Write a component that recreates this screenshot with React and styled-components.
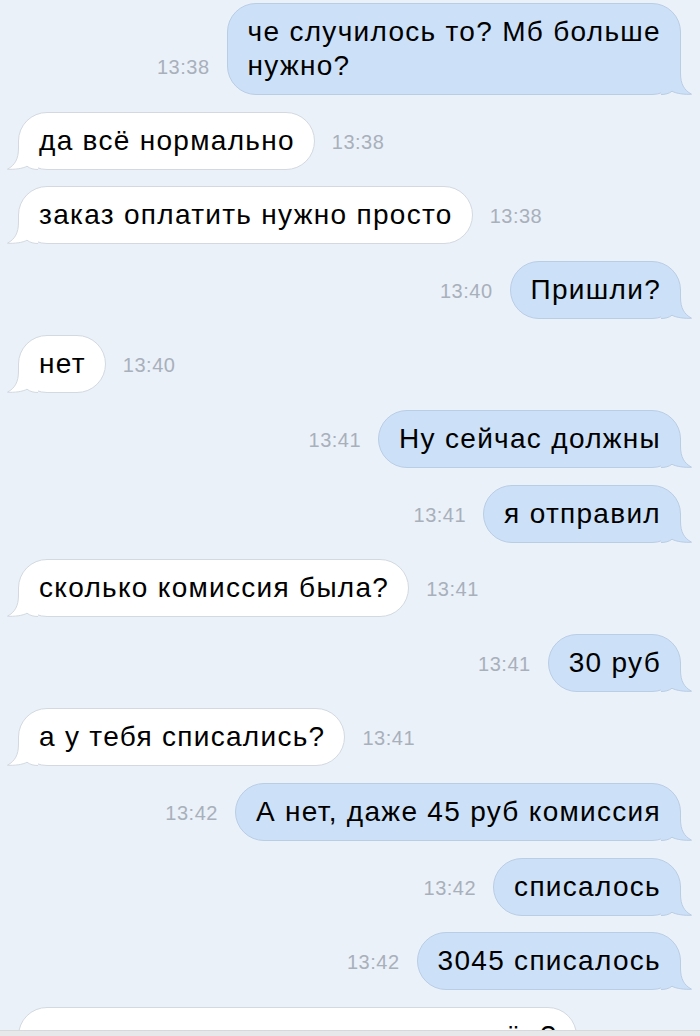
import React from "react";
import styled, { createGlobalStyle } from "styled-components";

const GlobalStyle = createGlobalStyle`
  html, body {
    margin: 0;
    padding: 0;
    background: #ebf1f9;
  }
  * {
    box-sizing: border-box;
  }
`;

const Screen = styled.div`
  width: 700px;
  height: 1036px;
  overflow: hidden;
  position: relative;
  background: #ebf1f9;
  font-family: "Liberation Sans", Arial, sans-serif;
  display: flex;
  flex-direction: column;
`;

const Feed = styled.div`
  flex: 1;
  overflow: hidden;
  display: flex;
  flex-direction: column;
  gap: 16.6px;
  padding: 3px 19px 0 18px;
`;

const Row = styled.div`
  display: flex;
  flex-direction: ${(p) => (p.$out ? "row-reverse" : "row")};
  align-items: flex-end;
  gap: 17px;
  flex-shrink: 0;
`;

const Bubble = styled.div`
  position: relative;
  padding: 11px 19px 11px 20px;
  border-radius: 29px;
  border: 1px solid ${(p) => (p.$out ? "#b9cde6" : "#d3d9e1")};
  background: ${(p) => (p.$out ? "#cce0f7" : "#ffffff")};
  color: #000;
  font-size: 28px;
  line-height: 34px;
  letter-spacing: 1.3px;
  white-space: pre-line;
`;

const Tail = styled.svg`
  position: absolute;
  bottom: -1px;
  width: 30px;
  height: 30px;
  overflow: visible;
  ${(p) =>
    p.$out
      ? "right: -11px;"
      : "left: -11px; transform: scaleX(-1);"}
`;

const Time = styled.span`
  font-size: 20px;
  line-height: 34px;
  margin-bottom: 11px;
  letter-spacing: 0.5px;
  color: #a8b0bb;
  white-space: nowrap;
`;

const BottomBar = styled.div`
  position: absolute;
  left: 0;
  right: 0;
  bottom: 0;
  height: 6px;
  background: #e7e8ea;
  border-top: 1px solid #d6d8dc;
`;

const messages = [
  { out: true, text: "че случилось то? Мб больше\nнужно?", time: "13:38" },
  { out: false, text: "да всё нормально", time: "13:38" },
  { out: false, text: "заказ оплатить нужно просто", time: "13:38" },
  { out: true, text: "Пришли?", time: "13:40" },
  { out: false, text: "нет", time: "13:40" },
  { out: true, text: "Ну сейчас должны", time: "13:41" },
  { out: true, text: "я отправил", time: "13:41" },
  { out: false, text: "сколько комиссия была?", time: "13:41" },
  { out: true, text: "30 руб", time: "13:41" },
  { out: false, text: "а у тебя списались?", time: "13:41" },
  { out: true, text: "А нет, даже 45 руб комиссия", time: "13:42" },
  { out: true, text: "списалось", time: "13:42" },
  { out: true, text: "3045 списалось", time: "13:42" },
  { out: false, text: "ну ты номер карты правильно ввёл?", time: "13:43" },
];

const BubbleTail = ({ out }) => {
  const fill = out ? "#cce0f7" : "#ffffff";
  const stroke = out ? "#b9cde6" : "#d3d9e1";
  const edge =
    "M19.5 0 L19.5 8 C19.5 19 23 25 30.5 29.2 C24 29.7 15 28.6 11 26.2 C8 28.6 4 29.5 0 29.5";
  return (
    <Tail $out={out} viewBox="0 0 30 30">
      <path d={`${edge} L0 0 Z`} fill={fill} />
      <path d={edge} fill="none" stroke={stroke} strokeWidth="1" />
    </Tail>
  );
};

export default function App() {
  return (
    <>
      <GlobalStyle />
      <Screen>
        <Feed>
          {messages.map((m, i) => (
            <Row key={i} $out={m.out}>
              <Bubble $out={m.out}>
                {m.text}
                <BubbleTail out={m.out} />
              </Bubble>
              <Time>{m.time}</Time>
            </Row>
          ))}
        </Feed>
        <BottomBar />
      </Screen>
    </>
  );
}
